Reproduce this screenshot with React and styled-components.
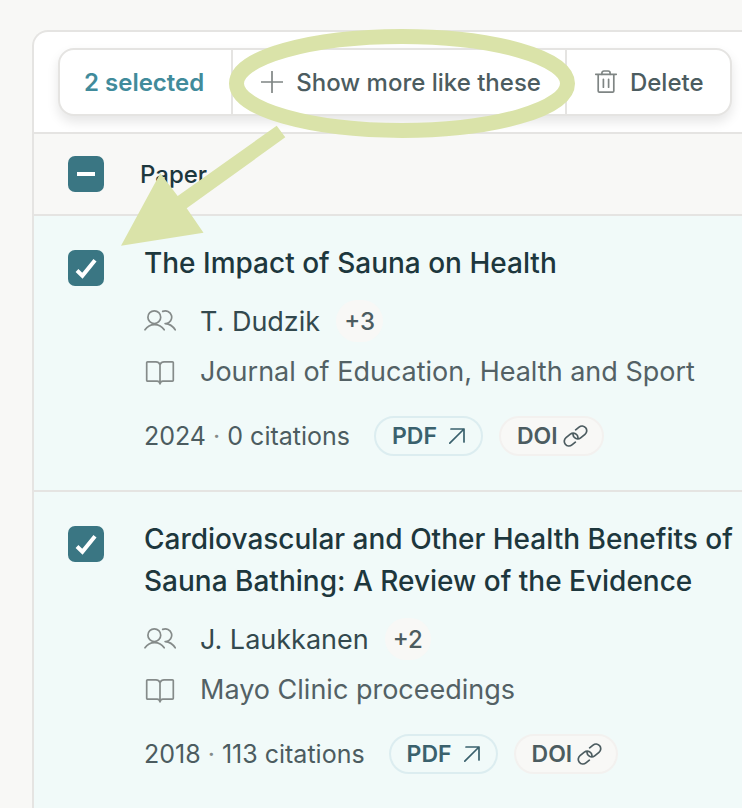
import React, { useState } from 'react';
import styled, { createGlobalStyle } from 'styled-components';

const papers = [
  {
    id: 'sauna-impact',
    title: 'The Impact of Sauna on Health',
    author: 'T. Dudzik',
    more: 3,
    journal: 'Journal of Education, Health and Sport',
    year: 2024,
    citations: 0,
  },
  {
    id: 'sauna-bathing',
    title: 'Cardiovascular and Other Health Benefits of Sauna Bathing: A Review of the Evidence',
    author: 'J. Laukkanen',
    more: 2,
    journal: 'Mayo Clinic proceedings',
    year: 2018,
    citations: 113,
  },
];

const PlusIcon = () => (
  <Icon width="22" height="22" viewBox="0 0 22 22" aria-hidden="true">
    <path d="M11 .5v21M.5 11h21" />
  </Icon>
);

const TrashIcon = () => (
  <Icon width="22" height="24" viewBox="0 0 22 24" aria-hidden="true">
    <path d="M.7 4.3h20.6M3.2 4.3v16.6a1.2 1.2 0 0 0 1.2 1.2h13.2a1.2 1.2 0 0 0 1.2-1.2V4.3" />
    <path d="M6.9 4.3V3a2 2 0 0 1 2-2h4.2a2 2 0 0 1 2 2v1.3M8.4 9.3v7.9M13.6 9.3v7.9" />
  </Icon>
);

const UsersIcon = () => (
  <Icon width="32" height="32" viewBox="0 0 32 32" aria-hidden="true">
    <circle cx="10.3" cy="12.2" r="6.4" />
    <path d="M1 24.8a11.4 11.4 0 0 1 19.2 0M18.7 6.4a6.4 6.4 0 1 1 3.4 12.2h-1q6.6.4 10.1 6.2" />
  </Icon>
);

const BookIcon = () => (
  <Icon width="32" height="32" viewBox="0 0 32 32" aria-hidden="true">
    <path d="M16 9.6q-1.2-2.8-4-2.8H3.6a.9.9 0 0 0-.9.9v17.6a.9.9 0 0 0 .9.9h9.6q2.2 0 2.8 2.6.6-2.6 2.8-2.6h9.6a.9.9 0 0 0 .9-.9V7.7a.9.9 0 0 0-.9-.9H20q-2.8 0-4 2.8v19" />
  </Icon>
);

const ArrowIcon = () => (
  <Icon width="18" height="16" viewBox="0 0 18 16" aria-hidden="true">
    <path d="M.8 15.2L15 1M2 1h13v13" />
  </Icon>
);

const LinkIcon = () => (
  <Icon width="25" height="22" viewBox="0 0 25 22" aria-hidden="true">
    <g transform="translate(12.5 11) rotate(-39)">
      <path d="M-4 4.7h-4.4a4.7 4.7 0 0 1 0-9.4h5.6A4.7 4.7 0 0 1 .5 3.3" />
      <path d="M4-4.7h4.4a4.7 4.7 0 0 1 0 9.4H2.8A4.7 4.7 0 0 1-.5-3.3" />
    </g>
  </Icon>
);

function Check({ label, checked, mixed, onChange }) {
  return (
    <CheckLabel>
      <CheckInput type="checkbox" aria-label={label} checked={checked} onChange={onChange} />
      {(checked || mixed) && (
        <CheckMark viewBox="0 0 36 36" aria-hidden="true">
          {mixed ? <path d="M9 18h18" /> : <path d="M9 20.5l5.4 5.3L27 10.2" />}
        </CheckMark>
      )}
    </CheckLabel>
  );
}

function PaperRow({ paper, selected, onToggle }) {
  return (
    <Row $selected={selected}>
      <CheckCell>
        <Check label={`Select ${paper.title}`} checked={selected} onChange={onToggle} />
      </CheckCell>
      <PaperCell>
        <Title>{paper.title}</Title>
        <Details>
          <DetailLine $dark>
            <UsersIcon />
            {paper.author}
            <MoreButton type="button">+{paper.more}</MoreButton>
          </DetailLine>
          <DetailLine>
            <BookIcon />
            {paper.journal}
          </DetailLine>
        </Details>
        <Meta>
          <span>{paper.year} <Dot>·</Dot> {paper.citations} citations</span>
          <Links>
            <Pill href="#pdf" $accent>PDF<ArrowIcon /></Pill>
            <Pill href="#doi">DOI<LinkIcon /></Pill>
          </Links>
        </Meta>
      </PaperCell>
    </Row>
  );
}

export default function App() {
  const [selected, setSelected] = useState(papers.map((p) => p.id));

  const toggle = (id) => {
    setSelected(selected.includes(id) ? selected.filter((s) => s !== id) : [...selected, id]);
  };

  return (
    <Page>
      <GlobalStyle />
      <Panel>
        <Toolbar>
          <Actions>
            <Count>{selected.length} selected</Count>
            <Action type="button">
              <PlusIcon />
              Show more like these
            </Action>
            <Action type="button">
              <TrashIcon />
              Delete
            </Action>
          </Actions>
        </Toolbar>
        <Table>
          <thead>
            <tr>
              <HeadCheck>
                <Check
                  label="Select all papers"
                  checked={false}
                  mixed={selected.length > 0}
                  onChange={() => setSelected(selected.length ? [] : papers.map((p) => p.id))}
                />
              </HeadCheck>
              <HeadCell>Paper</HeadCell>
            </tr>
          </thead>
          <tbody>
            {papers.map((paper) => (
              <PaperRow
                key={paper.id}
                paper={paper}
                selected={selected.includes(paper.id)}
                onToggle={() => toggle(paper.id)}
              />
            ))}
          </tbody>
        </Table>
      </Panel>
      <Annotation width="742" height="260" viewBox="0 0 742 260" aria-hidden="true">
        <ellipse cx="402" cy="83.4" rx="165.5" ry="47" fill="none" stroke="#dae3a9" strokeWidth="15" />
        <path
          d="M276.7 125.7L285.3 137.3L186.7 208.3L203.5 232.7L121 245.7L160.3 173.3L177.7 196Z"
          fill="#dae3a9"
        />
      </Annotation>
    </Page>
  );
}

const GlobalStyle = createGlobalStyle`
  * {
    box-sizing: border-box;
  }

  body {
    margin: 0;
    background: #f8f8f6;
    font-family: Inter, 'Liberation Sans', sans-serif;
    -webkit-font-smoothing: antialiased;
  }
`;

const Page = styled.main`
  position: relative;
  display: flex;
  min-height: 100vh;
  padding: 30px 0 0 32px;
`;

const Panel = styled.section`
  flex: 1;
  min-width: 0;
  border: 2px solid #e5e4e2;
  border-width: 2px 0 0 2px;
  border-top-left-radius: 16px;
  background: #fff;
  overflow: hidden;
`;

const Toolbar = styled.div`
  display: flex;
  padding: 16px 10px 16px 24px;
`;

const Actions = styled.div`
  display: flex;
  flex: 1;
  height: 68px;
  border: 2px solid #e5e4e2;
  border-radius: 16px;
  background: #fff;
  box-shadow: 0 6px 12px rgba(0, 0, 0, 0.1);
  font-size: 24px;
  font-weight: 500;
  color: #4c5c60;
  white-space: nowrap;
`;

const Count = styled.span`
  display: flex;
  align-items: center;
  padding: 0 27px 0 24px;
  font-weight: 600;
  color: #418b9b;
`;

const Icon = styled.svg`
  flex: none;
  fill: none;
  stroke: currentColor;
  stroke-width: 1.7;
  stroke-linecap: round;
  stroke-linejoin: round;
`;

const Action = styled.button`
  display: flex;
  align-items: center;
  gap: 13px;
  padding: 0 24px 0 28px;
  border: 0;
  border-left: 2px solid #e5e4e2;
  background: none;
  color: inherit;
  font: inherit;
  cursor: pointer;

  ${Icon} {
    color: #7f8584;
  }
`;

const Table = styled.table`
  width: 100%;
  border-collapse: separate;
  border-spacing: 0;
  text-align: left;

  th,
  td {
    border-top: 2px solid #e5e4e2;
    vertical-align: top;
  }
`;

const HeadCell = styled.th`
  height: 82px;
  padding: 23px 0 20px;
  background: #f8f8f6;
  color: #1d373d;
  font-size: 24px;
  font-weight: 500;
  line-height: 36px;
`;

const HeadCheck = styled(HeadCell)`
  width: 106px;
  padding: 22px 36px 22px 34px;
`;

const Row = styled.tr`
  background: ${({ $selected }) => ($selected ? '#f1faf9' : '#fff')};
`;

const CheckCell = styled.td`
  padding: 34px 36px 34px 34px;
`;

const PaperCell = styled.td`
  padding: 26px 4px 34px;
`;

const CheckLabel = styled.label`
  display: grid;
  width: 36px;
  height: 36px;
`;

const CheckInput = styled.input`
  grid-area: 1 / 1;
  width: 36px;
  height: 36px;
  margin: 0;
  appearance: none;
  border-radius: 7px;
  background: #3a7683;
  cursor: pointer;
`;

const CheckMark = styled.svg`
  grid-area: 1 / 1;
  fill: none;
  stroke: #fff;
  stroke-width: 4;
  pointer-events: none;
`;

const Title = styled.h2`
  margin: 0 0 16px;
  color: #1d373d;
  font-size: 28px;
  font-weight: 500;
  line-height: 42px;
`;

const Details = styled.div`
  display: flex;
  flex-direction: column;
  gap: 8px;
  margin-bottom: 24px;
`;

const DetailLine = styled.div`
  display: flex;
  align-items: center;
  height: 42px;
  color: ${({ $dark }) => ($dark ? '#33494e' : '#536165')};
  font-size: 27px;

  ${Icon} {
    margin-right: 24px;
    color: #858b8a;
  }
`;

const MoreButton = styled.button`
  height: 42px;
  margin-left: 16px;
  padding: 0 8px;
  border: 0;
  border-radius: 21px;
  background: #f8f8f6;
  color: #4c5c60;
  font: inherit;
  font-size: 24px;
  font-weight: 500;
  cursor: pointer;
`;

const Meta = styled.div`
  display: flex;
  align-items: center;
  gap: 24px;
  color: #4c5c60;
  font-size: 25px;
`;

const Dot = styled.span`
  color: #858b8a;
`;

const Links = styled.div`
  display: flex;
  gap: 16px;
`;

const Pill = styled.a`
  display: flex;
  align-items: center;
  gap: ${({ $accent }) => ($accent ? 12 : 5)}px;
  height: 40px;
  padding: 0 14px 0 16px;
  border: 2px solid ${({ $accent }) => ($accent ? '#dcedf0' : '#f3f1ef')};
  border-radius: 20px;
  background: ${({ $accent }) => ($accent ? '#f1faf9' : '#f8f8f6')};
  color: ${({ $accent }) => ($accent ? '#3a616d' : '#4c5c60')};
  font-size: 23px;
  font-weight: 600;
  text-decoration: none;
`;

// callout that lies over the toolbar and table
const Annotation = styled.svg`
  position: absolute;
  top: 0;
  left: 0;
  pointer-events: none;
`;
